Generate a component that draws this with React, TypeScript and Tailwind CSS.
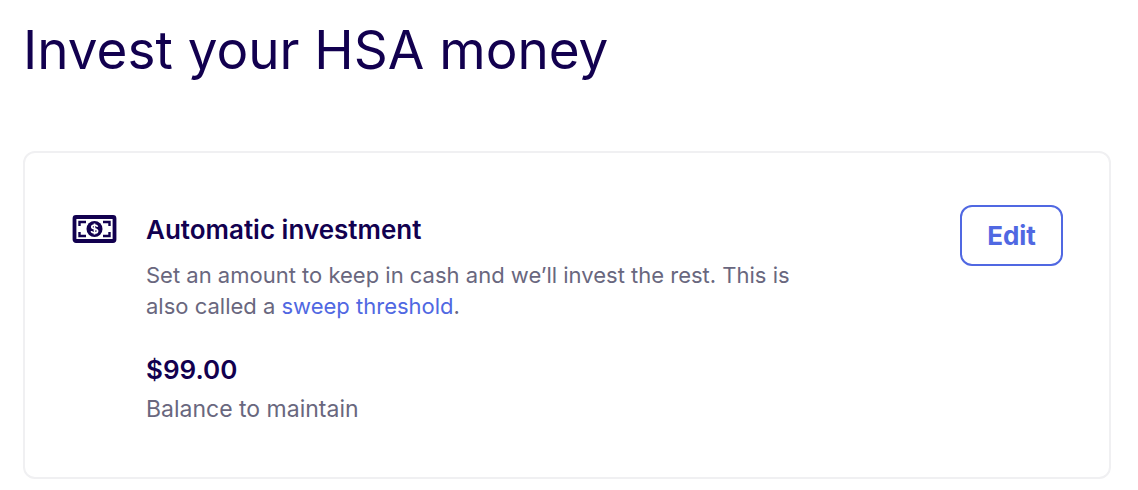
function CashIcon() {
  return (
    <svg
      viewBox="0 0 45 28"
      className="mt-[10px] h-7 w-[45px] shrink-0"
      fill="none"
      aria-hidden="true"
    >
      <rect x="2.5" y="2" width="40" height="24" rx="1.5" stroke="#12004f" strokeWidth="3.8" />
      <path
        d="M14 7H7.5V11M7.5 17V21H14M31 7H37.5V11M37.5 17V21H31"
        stroke="#12004f"
        strokeWidth="2.4"
      />
      <circle cx="22.5" cy="14" r="8" fill="#12004f" />
      <path
        d="M25.4 11.8C25.2 10.6 24.2 10 22.6 10C20.9 10 19.8 10.7 19.8 11.9C19.8 14.6 25.6 13.2 25.6 16C25.6 17.3 24.4 18 22.6 18C20.8 18 19.6 17.3 19.5 16M22.5 8.5V19.5"
        stroke="white"
        strokeWidth="1.7"
      />
    </svg>
  );
}

function App() {
  const handleEdit = () => {
    console.log("edit button clicked");
  };

  return (
    <main className="pl-[23px] pr-[27px] pt-[18px] pb-3 bg-white font-[Inter,sans-serif] text-[#12004f]">
      <h1 className="text-[53px] leading-[64px]">Invest your HSA money</h1>

      <section className="mt-[69px] flex items-start rounded-xl border-2 border-[#f0f0f2] pl-[47px] pr-[46px] py-[52px]">
        <CashIcon />
        <div className="ml-[29px] mt-[5px] max-w-[670px]">
          <h2 className="text-[26px] leading-10 font-semibold">
            Automatic investment
          </h2>
          <p className="mt-[10px] text-[22px] leading-[31px] text-[#69677e]">
            Set an amount to keep in cash and we’ll invest the rest. This is
            also called a{" "}
            <a href="#sweep-threshold" className="text-[#5068e2]">
              sweep threshold
            </a>
            .
          </p>
          <p className="mt-7 text-[26px] leading-10 font-semibold">$99.00</p>
          <p className="mt-1 text-[23px] leading-[31px] text-[#69677e]">
            Balance to maintain
          </p>
        </div>
        <button
          type="button"
          className="ml-auto h-[61px] w-[103px] shrink-0 rounded-xl border-2 border-[#5068e2] text-[26px] font-bold text-[#5068e2]"
          onClick={handleEdit}
        >
          Edit
        </button>
      </section>
    </main>
  );
}

export default App;
